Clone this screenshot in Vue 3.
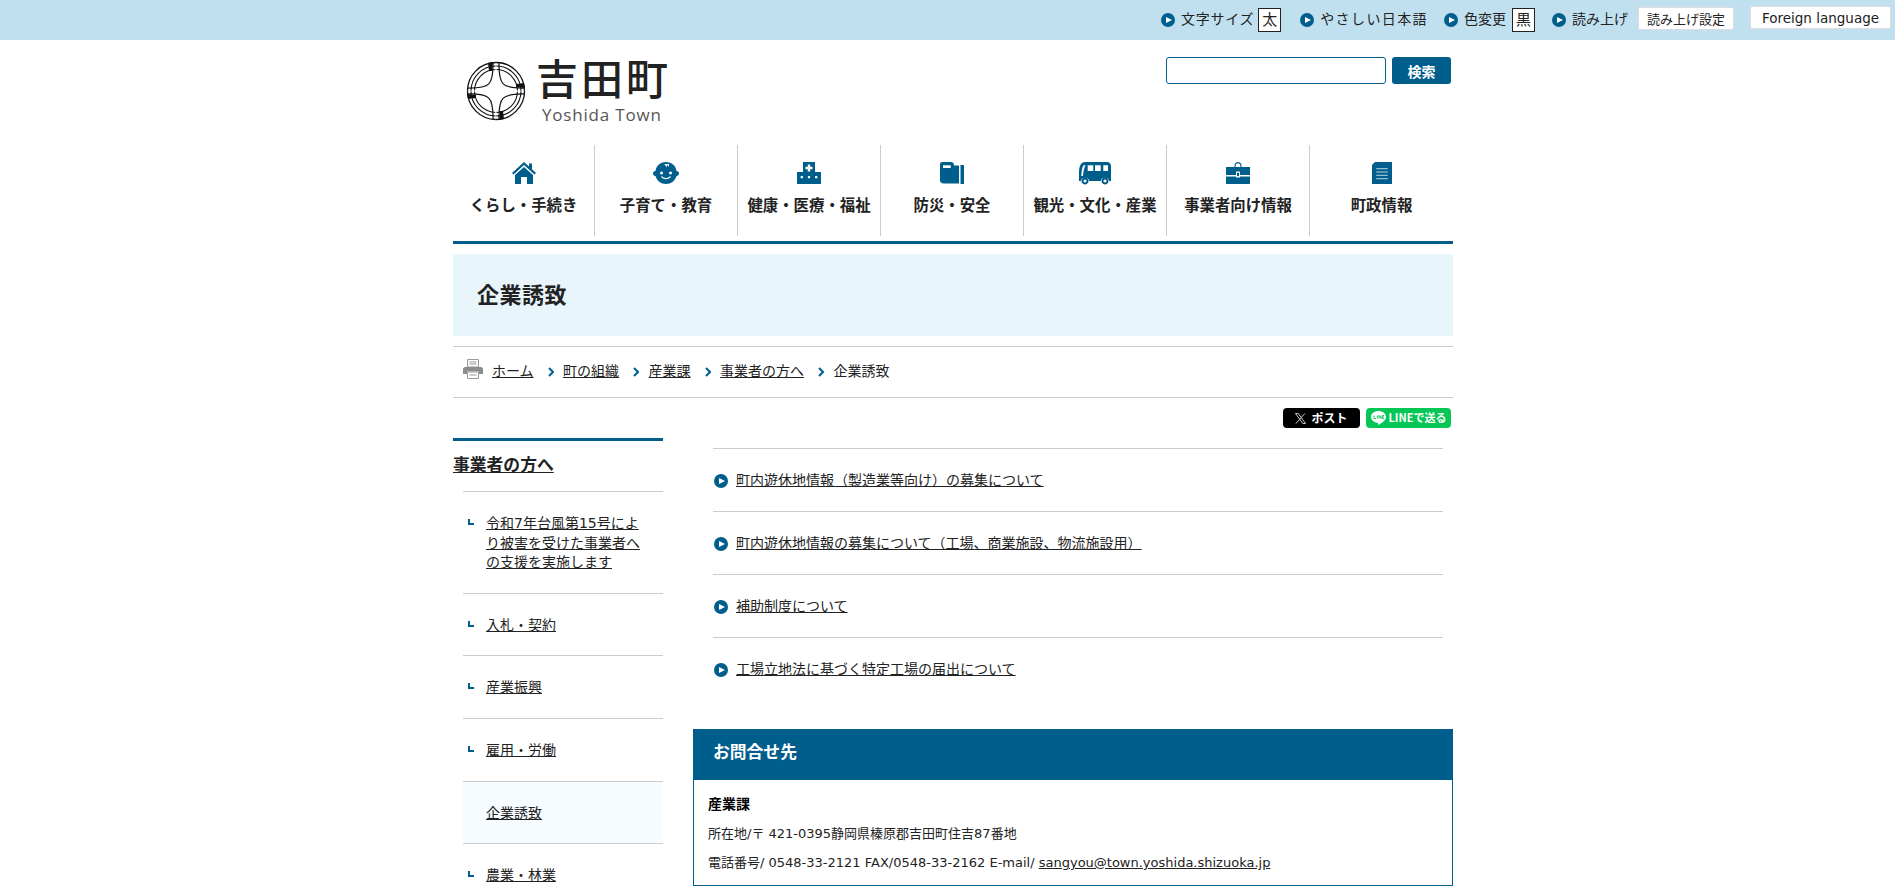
<script setup>
const navItems = [
  { label: "くらし・手続き", icon: "home" },
  { label: "子育て・教育", icon: "baby" },
  { label: "健康・医療・福祉", icon: "hospital" },
  { label: "防災・安全", icon: "safety" },
  { label: "観光・文化・産業", icon: "bus" },
  { label: "事業者向け情報", icon: "case" },
  { label: "町政情報", icon: "doc" },
]
const crumbs = ["ホーム", "町の組織", "産業課", "事業者の方へ"]
const sideItems = [
  { label: "令和7年台風第15号により被害を受けた事業者への支援を実施します" },
  { label: "入札・契約" },
  { label: "産業振興" },
  { label: "雇用・労働" },
  { label: "企業誘致", current: true },
  { label: "農業・林業" },
]
const links = [
  "町内遊休地情報（製造業等向け）の募集について",
  "町内遊休地情報の募集について（工場、商業施設、物流施設用）",
  "補助制度について",
  "工場立地法に基づく特定工場の届出について",
]
</script>

<template>
  <div class="page">
    <div class="topbar">
      <span class="tool size"><i class="dot"></i><span class="size-label">文字サイズ</span><b class="box">太</b></span>
      <span class="tool easy"><i class="dot"></i><span class="spaced">やさしい日本語</span></span>
      <span class="tool color"><i class="dot"></i>色変更<b class="box">黒</b></span>
      <span class="tool read"><i class="dot"></i><small>読み上げ</small><button class="tbtn small">読み上げ設定</button></span>
      <button class="tbtn foreign">Foreign language</button>
    </div>

    <div class="wrap">
      <header class="head">
        <div class="logo">
          <svg class="mark" width="60" height="60" viewBox="-30 -30 60 60">
            <circle r="28.500" fill="none" stroke="#111" stroke-width="1.300" />
            <circle r="25" fill="none" stroke="#111" stroke-width="1.100" />
            <circle r="21.500" fill="none" stroke="#111" stroke-width="1.100" />
            <path d="M0-30 C-1-6-6-1-30 0 C-6 1-1 6 0 30 C1 6 6 1 30 0 C6-1 1-6 0-30Z" fill="#fff" />
            <path d="M-3-29 C-2.500-6-6-2.500-29-3 M3-29 C2.500-6 6-2.500 29-3 M-3 29 C-2.500 6-6 2.500-29 3 M3 29 C2.500 6 6 2.500 29 3" fill="none" stroke="#111" stroke-width="1.200" />
            <path d="M-8-28 L-3-29 L-4-20 L-7-20 Z M28-8 L29-3 L20-4 L20-7 Z M8 28 L3 29 L4 20 L7 20 Z M-28 8 L-29 3 L-20 4 L-20 7 Z" fill="#111" />
          </svg>
          <div class="logo-text">
            <div class="logo-ja">吉田町</div>
            <div class="logo-en">Yoshida Town</div>
          </div>
        </div>
        <form class="search" @submit.prevent>
          <input type="text" />
          <button>検索</button>
        </form>
      </header>

      <nav class="gnav">
        <a v-for="item in navItems" :key="item.label" class="gitem">
          <svg width="32" height="23" viewBox="0 0 32 23" class="gicon">
            <template v-if="item.icon === 'home'">
              <path d="M16 0 L21 4.500 V1.500 H24 V7.300 L28 11 L26.500 12.500 L16 3 L5.500 12.500 L4 11 Z" />
              <path d="M16 5 L25 13 V22 H19 V15 H13 V22 H7 V13 Z" />
            </template>
            <template v-else-if="item.icon === 'baby'">
              <path fill-rule="evenodd" d="M16 0 C22 0 26 4 26.500 9 C28.500 9 29 10.500 29 11.500 C29 13 28 14 26.500 14 C25 19 21 22 16 22 C11 22 7 19 5.500 14 C4 14 3 13 3 11.500 C3 10.500 3.500 9 5.500 9 C6 4 10 0 16 0 Z M11.500 9.500 a1.500 1.500 0 1 0 .01 0 Z M20.500 9.500 a1.500 1.500 0 1 0 .01 0 Z M11 14.500 C12.500 18 19.500 18 21 14.500 L19.800 14.200 C18.500 16.500 13.500 16.500 12.200 14.200 Z M14.500 2 L16.500 5.500 L17 2.500 L19 5 L19 2 Z" />
            </template>
            <template v-else-if="item.icon === 'hospital'">
              <path fill-rule="evenodd" d="M10 0 H22 V10 H28 V22 H4 V10 H10 Z M14.800 2.500 V4.800 H12.500 V7.200 H14.800 V9.500 H17.200 V7.200 H19.500 V4.800 H17.200 V2.500 Z M7.700 14 v2.200 h2.200 v-2.200 Z M14.900 14 v2.200 h2.200 v-2.200 Z M22.100 14 v2.200 h2.200 v-2.200 Z" />
            </template>
            <template v-else-if="item.icon === 'safety'">
              <path fill-rule="evenodd" d="M6 0 H15 C17 0 18 1.500 18 3.500 H23 V21.500 H8 C5 21.500 4 20 4 18 V2 C4 1 5 0 6 0 Z M7 3.200 V6 H14.700 V3.200 Z" />
              <path d="M24.500 3 H28 V22 H24.500 Z" />
            </template>
            <template v-else-if="item.icon === 'bus'">
              <path fill-rule="evenodd" d="M6 0 H28 C30.500 0 32 2 32 4 V19 H30.300 A4.500 4.500 0 0 0 21.700 19 H10.300 A4.500 4.500 0 0 0 1.700 19 H0 V10 C0 4 2 0 6 0 Z M8.700 3.300 V9 H14.300 V3.300 Z M16 3.300 V9 H21.700 V3.300 Z M24.300 3.300 V9 H29 V3.300 Z M4.500 3.300 C3 6 2.500 10 2.300 14 L4 14 C4.300 10 5 6 6.500 3.300 Z" />
              <path fill-rule="evenodd" d="M6 15.500 a3.500 3.500 0 1 0 .01 0 Z M6 17.500 a1.500 1.500 0 1 1 -.01 0 Z M26 15.500 a3.500 3.500 0 1 0 .01 0 Z M26 17.500 a1.500 1.500 0 1 1 -.01 0 Z" />
            </template>
            <template v-else-if="item.icon === 'case'">
              <path fill-rule="evenodd" d="M12.500 5 V3.500 C12.500 1.500 14 0 16 0 C18 0 19.500 1.500 19.500 3.500 V5 H18.400 V3.500 C18.400 2.200 17.300 1.200 16 1.200 C14.700 1.200 13.600 2.200 13.600 3.500 V5 Z" />
              <path d="M4 5 H28 V13 H4 Z M4 14.500 H28 V22 H4 Z" />
              <rect x="14" y="9.500" width="4" height="6" fill="#fff" />
              <rect x="15" y="10.800" width="2" height="3.300" />
            </template>
            <template v-else>
              <path d="M9 0 H26 V22 H6 V3 Z" />
              <path d="M10.300 6.700 H21.700 M10.300 10 H21.700 M10.300 13.300 H21.700 M10.300 16.700 H21.700" stroke="#bcd6e4" stroke-width="1" />
            </template>
          </svg>
          <span>{{ item.label }}</span>
        </a>
      </nav>

      <h1 class="title">企業誘致</h1>

      <div class="crumbs">
        <svg class="printer" width="20" height="20" viewBox="0 0 20 20">
          <path d="M4.500 .5 H15.500 V8 H4.500 Z" fill="#fff" stroke="#999" />
          <path d="M6.500 3 H13.500 M6.500 5 H13.500" stroke="#999" />
          <path d="M2 8 H18 C19 8 20 9 20 10 V15 H16 V12.500 H4 V15 H0 V10 C0 9 1 8 2 8Z" fill="#8c8c8c" />
          <path d="M4.500 13 H15.500 V19.500 H4.500 Z" fill="#fff" stroke="#999" />
          <path d="M6.500 16 H13.500" stroke="#999" />
        </svg>
        <template v-for="c in crumbs" :key="c">
          <a class="crumb">{{ c }}</a>
          <svg class="sep" width="6" height="10" viewBox="0 0 6 10"><path d="M1 1 L5 5 L1 9" fill="none" stroke="#005e8c" stroke-width="2" /></svg>
        </template>
        <span class="crumb-now">企業誘致</span>
      </div>

      <div class="share">
        <span class="sbtn x">
          <svg width="11" height="11" viewBox="0 0 12 12"><path d="M.5.5 H3.500 L11.500 11.500 H8.500 Z M10.800.5 L1 11.500" fill="none" stroke="#ddd" stroke-width="1" /></svg>
          ポスト
        </span>
        <span class="sbtn line">
          <svg width="15" height="14" viewBox="0 0 15 14"><path d="M7.500 0 C11.600 0 15 2.600 15 5.900 C15 9 11 12 7 14 C7.300 12.500 7.200 11.800 6.500 11.700 C2.800 11.300 0 8.900 0 5.900 C0 2.600 3.400 0 7.500 0Z" fill="#fff" /><path d="M3 4.500 V7.500 H5 M6.300 4.500 V7.500 M8 7.500 V4.500 L10 7.500 V4.500 M13 4.500 H11.300 V7.500 H13 M11.300 6 H13" fill="none" stroke="#06c755" stroke-width=".9" /></svg>
          LINEで送る
        </span>
      </div>

      <div class="columns">
        <aside class="side">
          <h2 class="side-title"><a>事業者の方へ</a></h2>
          <ul class="side-list">
            <li v-for="s in sideItems" :key="s.label" :class="{ current: s.current }">
              <i v-if="!s.current" class="hook"></i>
              <a>{{ s.label }}</a>
            </li>
          </ul>
        </aside>
        <main class="body">
          <ul class="links">
            <li v-for="l in links" :key="l"><i class="dot big"></i><a>{{ l }}</a></li>
          </ul>
          <section class="contact">
            <h2>お問合せ先</h2>
            <div class="contact-body">
              <p class="dept">産業課</p>
              <p>所在地/〒 421-0395静岡県榛原郡吉田町住吉87番地</p>
              <p>電話番号/ 0548-33-2121 FAX/0548-33-2162 E-mail/ <a>sangyou@town.yoshida.shizuoka.jp</a></p>
            </div>
          </section>
        </main>
      </div>
    </div>
  </div>
</template>

<style>
html, body {
  margin: 0;
  background: #fff;
  overflow: hidden;
}
</style>

<style scoped>
.page {
  font-family: "DejaVu Sans", "Noto Sans CJK JP", sans-serif;
  font-size: 14px;
  color: #222;
  line-height: 1.4;
  height: 892px;
  overflow: hidden;
}
a {
  color: #222;
}
ul {
  list-style: none;
  margin: 0;
  padding: 0;
}
.topbar {
  height: 40px;
  background: #c0e0f0;
  display: flex;
  align-items: center;
  justify-content: flex-end;
  padding-right: 4px;
  color: #222;
}
.tool {
  display: flex;
  align-items: center;
  margin-right: 19px;
}
.tool.easy {
  margin-right: 16px;
}
.tool.color {
  margin-right: 17px;
}
.tool.read {
  margin-right: 16px;
}
.dot {
  display: inline-block;
  width: 14px;
  height: 14px;
  border-radius: 50%;
  background: #005e8c;
  margin-right: 6px;
  position: relative;
  flex: none;
}
.dot::after {
  content: "";
  position: absolute;
  left: 5px;
  top: 3.500px;
  border-left: 6px solid #fff;
  border-top: 3.500px solid transparent;
  border-bottom: 3.500px solid transparent;
}
.size-label {
  letter-spacing: .7px;
}
.spaced {
  letter-spacing: 1.400px;
}
.box {
  font-weight: 400;
  width: 21px;
  height: 22px;
  border: 1px solid #222;
  background: #fff;
  display: inline-flex;
  align-items: center;
  justify-content: center;
  margin-left: 6px;
  font-size: 15px;
}
.tool.size .box {
  margin-left: 4px;
}
small {
  font-size: 14px;
  margin-right: 10px;
}
.tbtn {
  font-family: inherit;
  background: #fff;
  border: 1px solid #ddd;
  border-radius: 2px;
  color: #222;
  padding: 0;
}
.tbtn.small {
  width: 96px;
  height: 23px;
  font-size: 13px;
  margin-top: -3px;
}
.tbtn.foreign {
  width: 141px;
  height: 23px;
  font-size: 13.500px;
  margin-top: -5px;
}
.wrap {
  width: 1000px;
  margin-left: 453px;
}
.head {
  height: 105px;
  display: flex;
  justify-content: space-between;
  align-items: flex-start;
}
.logo {
  display: flex;
  align-items: flex-start;
  padding: 21px 0 0 13px;
}
.logo-text {
  margin-left: 10px;
  margin-top: -15px;
}
.logo-ja {
  font-family: "Noto Sans CJK JP", sans-serif;
  font-size: 42px;
  font-weight: 500;
  line-height: 61px;
  letter-spacing: 3px;
  color: #222;
}
.logo-en {
  font-family: "Open Sans", sans-serif;
  font-size: 17px;
  line-height: 16px;
  letter-spacing: .8px;
  color: #555;
  margin-left: 6px;
}
.search {
  display: flex;
  gap: 6px;
  margin: 17px 2px 0 0;
}
.search input {
  width: 220px;
  height: 27px;
  box-sizing: border-box;
  border: 1px solid #005e8c;
  border-radius: 3px;
  padding: 0 4px;
  background: #fff;
}
.search button {
  width: 59px;
  height: 27px;
  border: none;
  border-radius: 3px;
  background: #005e8c;
  color: #fff;
  font-family: inherit;
  font-weight: 700;
  font-size: 14px;
  padding: 0;
}
.gnav {
  display: flex;
  border-bottom: 3px solid #005e8c;
  padding-bottom: 5px;
  height: 91px;
}
.gitem {
  width: 143px;
  flex: none;
  border-right: 1px solid #ccc;
  box-sizing: border-box;
  display: flex;
  flex-direction: column;
  align-items: center;
  padding-top: 17px;
  font-weight: 700;
  font-size: 15.400px;
  white-space: nowrap;
  color: #222;
}
.gitem:first-child {
  width: 142px;
}
.gitem:last-child {
  border-right: none;
}
.gicon {
  fill: #005e8c;
  margin-bottom: 11px;
  flex: none;
}
.title {
  margin: 10px 0 0;
  height: 82px;
  padding: 3px 0 0 24px;
  box-sizing: border-box;
  background: #e8f5fa;
  display: flex;
  align-items: center;
  font-size: 22px;
  letter-spacing: .5px;
  font-weight: 700;
  color: #222;
}
.crumbs {
  margin-top: 10px;
  height: 50px;
  border-top: 1px solid #ccc;
  border-bottom: 1px solid #ccc;
  display: flex;
  align-items: center;
  padding-left: 10px;
}
.printer {
  margin-right: 9px;
  margin-top: -6px;
}
.crumb {
  text-decoration: underline;
}
.sep {
  margin: 0 9.500px 0 14px;
}
.crumb-now {
  color: #222;
}
.share {
  display: flex;
  justify-content: flex-end;
  gap: 6px;
  padding: 10px 2px 0 0;
  height: 30px;
}
.sbtn {
  font-family: "Noto Sans CJK JP", sans-serif;
  height: 20px;
  border-radius: 4px;
  display: flex;
  align-items: center;
  justify-content: center;
  font-size: 12px;
  font-weight: 700;
  color: #fff;
  box-sizing: border-box;
}
.sbtn.x {
  width: 77px;
  background: #000;
  gap: 5px;
}
.sbtn.line {
  width: 85px;
  background: #06c755;
  gap: 3px;
  font-size: 11px;
}
.columns {
  display: flex;
  justify-content: space-between;
}
.side {
  width: 210px;
  border-top: 3px solid #005e8c;
}
.side-title {
  margin: 0;
  height: 50px;
  box-sizing: border-box;
  font-size: 16.800px;
  font-weight: 700;
  display: flex;
  align-items: center;
}
.side-title a {
  text-decoration: underline;
}
.side-list {
  margin-left: 10px;
}
.side-list li {
  border-top: 1px solid #ccc;
  padding: 22px 17px 20px 23px;
  position: relative;
  line-height: 19.600px;
}
.side-list li.current {
  background: #f6fcff;
}
.side-list a {
  text-decoration: underline;
}
.hook {
  position: absolute;
  left: 5px;
  top: 27px;
  width: 6px;
  height: 6px;
  border-left: 2px solid #005e8c;
  border-bottom: 2px solid #005e8c;
  box-sizing: border-box;
}
.body {
  width: 760px;
}
.links {
  margin: 10px 10px 0 20px;
}
.links li {
  height: 63px;
  box-sizing: border-box;
  border-top: 1px solid #ccc;
  display: flex;
  align-items: center;
  padding: 2px 0 0 1px;
}
.links a {
  text-decoration: underline;
}
.dot.big {
  margin-right: 8px;
}
.contact {
  margin-top: 29px;
  border: 1px solid #005e8c;
}
.contact h2 {
  margin: 0;
  height: 50px;
  padding-bottom: 4px;
  box-sizing: border-box;
  background: #005e8c;
  color: #fff;
  font-size: 16.800px;
  font-weight: 700;
  display: flex;
  align-items: center;
  padding-left: 19px;
}
.contact-body {
  padding: 14px 14px 12px;
  font-size: 13px;
}
.contact-body p {
  margin: 0 0 9.500px;
  line-height: 20px;
}
.contact-body p:last-child {
  margin-bottom: 0;
}
.contact-body .dept {
  font-weight: 700;
  font-size: 14px;
  color: #000;
}
.contact-body a {
  text-decoration: underline;
}
</style>
